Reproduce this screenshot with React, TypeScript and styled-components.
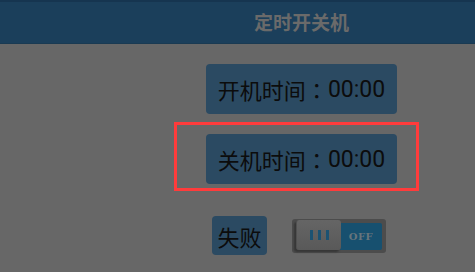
import React from "react";
import styled, { createGlobalStyle } from "styled-components";

const GlobalStyle = createGlobalStyle`
  html, body { margin: 0; padding: 0; }
  body {
    background: #676767;
    font-family: "Roboto", "Noto Sans CJK SC", sans-serif;
  }
`;

const Page = styled.div`
  width: 475px;
  height: 272px;
  background: #676767;
  overflow: hidden;
  display: flex;
  flex-direction: column;
`;

const Header = styled.header`
  height: 44px;
  box-sizing: border-box;
  background: #1b3f5b;
  border-top: 2px solid #163550;
  border-bottom: 1px solid #1a3a52;
  display: flex;
  align-items: center;
  padding-left: 128px;
`;

const Title = styled.h1`
  flex: 1;
  margin: 0;
  text-align: center;
  font-family: "Noto Sans CJK SC", sans-serif;
  font-weight: 700;
  font-size: 19px;
  color: #6a6a6a;
  padding-bottom: 2px;
`;

const Main = styled.main`
  margin-left: 128px;
  width: 347px;
  display: flex;
  flex-direction: column;
  align-items: center;
  padding-top: 20px;
`;

const TimeButton = styled.button`
  height: 50px;
  width: 191px;
  padding: 0;
  border: none;
  border-radius: 4px;
  background: #2b4a62;
  color: #0c0c0c;
  font-family: "Roboto", "Noto Sans CJK SC", sans-serif;
  font-size: 22px;
  display: flex;
  align-items: center;
  justify-content: center;
`;

const Colon = styled.span`
  font-family: "Noto Sans CJK TC", sans-serif;
`;

const Digits = styled.span`
  font-size: 23px;
`;

const Marked = styled.div`
  position: relative;
  margin-top: 20px;
`;

const Highlight = styled.div`
  position: absolute;
  left: -32px;
  top: -12px;
  width: 245px;
  height: 69px;
  box-sizing: border-box;
  border: 3px solid #ff3b3b;
  pointer-events: none;
`;

const Row = styled.div`
  margin-top: 32px;
  display: flex;
  align-items: center;
  gap: 25px;
  padding-right: 5px;
`;

const FailTag = styled.div`
  width: 55px;
  height: 39px;
  border-radius: 4px;
  background: #2b4a62;
  color: #0c0c0c;
  font-family: "Noto Sans CJK SC", sans-serif;
  font-size: 22px;
  display: flex;
  align-items: center;
  justify-content: center;
`;

const SwitchFrame = styled.div`
  width: 94px;
  height: 34px;
  box-sizing: border-box;
  background: #4c4c4c;
  border-radius: 3px;
  padding: 1px 4px 3px 4px;
  display: flex;
`;

const Knob = styled.div`
  width: 45px;
  height: 30px;
  box-sizing: border-box;
  background: linear-gradient(#656565, #595959);
  border-radius: 3px;
  border-left: 1px solid #505050;
  box-shadow: -2px 2px 2px #363636;
  display: flex;
  align-items: center;
  justify-content: center;
  gap: 5px;
  z-index: 1;
`;

const Bar = styled.span`
  display: block;
  width: 3px;
  height: 10px;
  background: #1c5272;
`;

const OffArea = styled.div`
  flex: 1;
  margin-top: 3px;
  margin-left: -1px;
  background: #17506f;
  border-radius: 0 2px 2px 0;
  display: flex;
  align-items: center;
  justify-content: center;
  font-family: "DejaVu Serif", serif;
  font-weight: 700;
  font-size: 10px;
  color: #68757c;
  letter-spacing: 0.5px;
`;

export default function App() {
  return (
    <>
      <GlobalStyle />
      <Page>
        <Header>
          <Title>定时开关机</Title>
        </Header>
        <Main>
          <TimeButton>
            开机时间<Colon>：</Colon>
            <Digits>00:00</Digits>
          </TimeButton>
          <Marked>
            <TimeButton>
              关机时间<Colon>：</Colon>
              <Digits>00:00</Digits>
            </TimeButton>
            <Highlight />
          </Marked>
          <Row>
            <FailTag>失败</FailTag>
            <SwitchFrame>
              <Knob>
                <Bar />
                <Bar />
                <Bar />
              </Knob>
              <OffArea>OFF</OffArea>
            </SwitchFrame>
          </Row>
        </Main>
      </Page>
    </>
  );
}
